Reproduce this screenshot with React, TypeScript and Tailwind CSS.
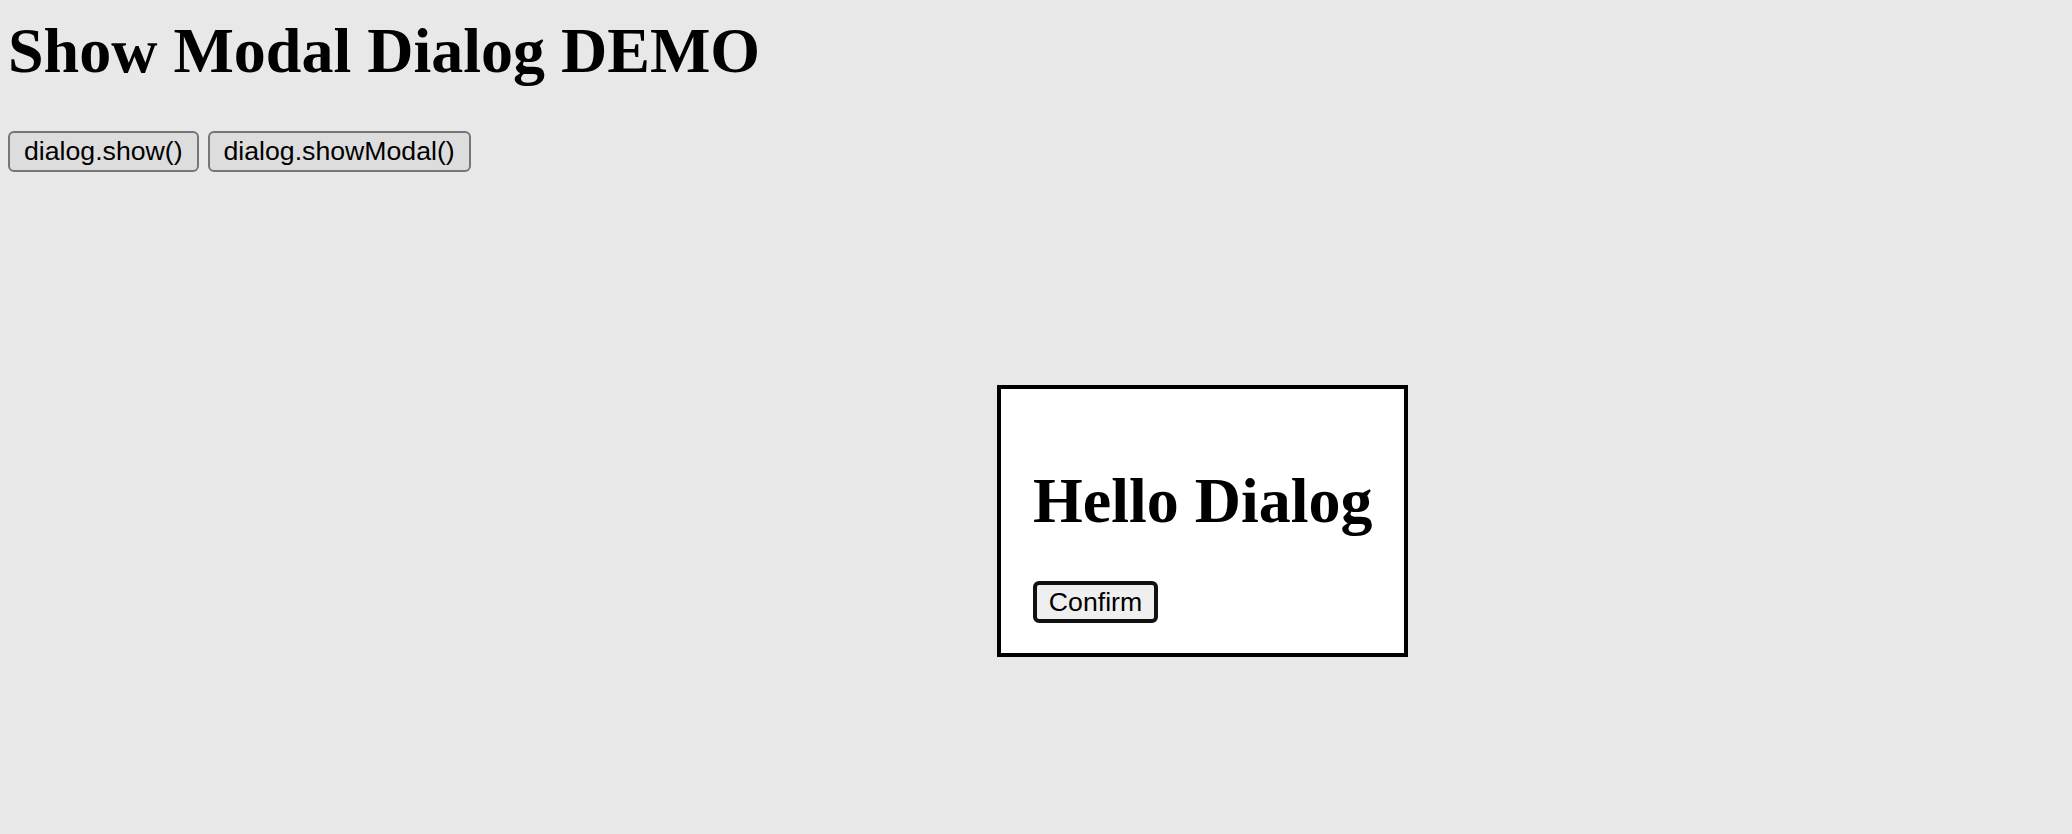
export default function App() {
  return (
    <div className="relative h-[834px] w-full overflow-hidden bg-[#e8e8e8] pl-[8px] pt-[14px] text-black">
      <h1
        className="mb-[43px] text-[64px] font-bold leading-[74px]"
        style={{ fontFamily: '"Liberation Serif", "Times New Roman", serif' }}
      >
        Show Modal Dialog DEMO
      </h1>

      {/* the two trigger buttons */}
      <div
        className="flex gap-[9px]"
        style={{ fontFamily: '"Liberation Sans", Arial, sans-serif' }}
      >
        <button className="flex h-[41px] items-center rounded-[6px] border-2 border-[#767676] bg-[#dddddd] px-[14px] text-[26.67px] leading-none">
          dialog.show()
        </button>
        <button className="flex h-[41px] items-center rounded-[6px] border-2 border-[#767676] bg-[#dddddd] px-[14px] text-[26.67px] leading-none">
          dialog.showModal()
        </button>
      </div>

      {/* open dialog */}
      <div className="absolute left-[997px] top-[385px] h-[272px] w-[411px] border-4 border-black bg-white px-[32px] pt-[32px]">
        <h2
          className="mt-[43px] mb-[43px] whitespace-nowrap text-[64px] font-bold leading-[74px]"
          style={{ fontFamily: '"Liberation Serif", "Times New Roman", serif' }}
        >
          Hello Dialog
        </h2>
        <button
          className="flex h-[42px] w-[125px] items-center justify-center rounded-[6px] border-4 border-[#111111] bg-[#efefef] text-[26.67px] leading-none"
          style={{ fontFamily: '"Liberation Sans", Arial, sans-serif' }}
        >
          Confirm
        </button>
      </div>
    </div>
  );
}
